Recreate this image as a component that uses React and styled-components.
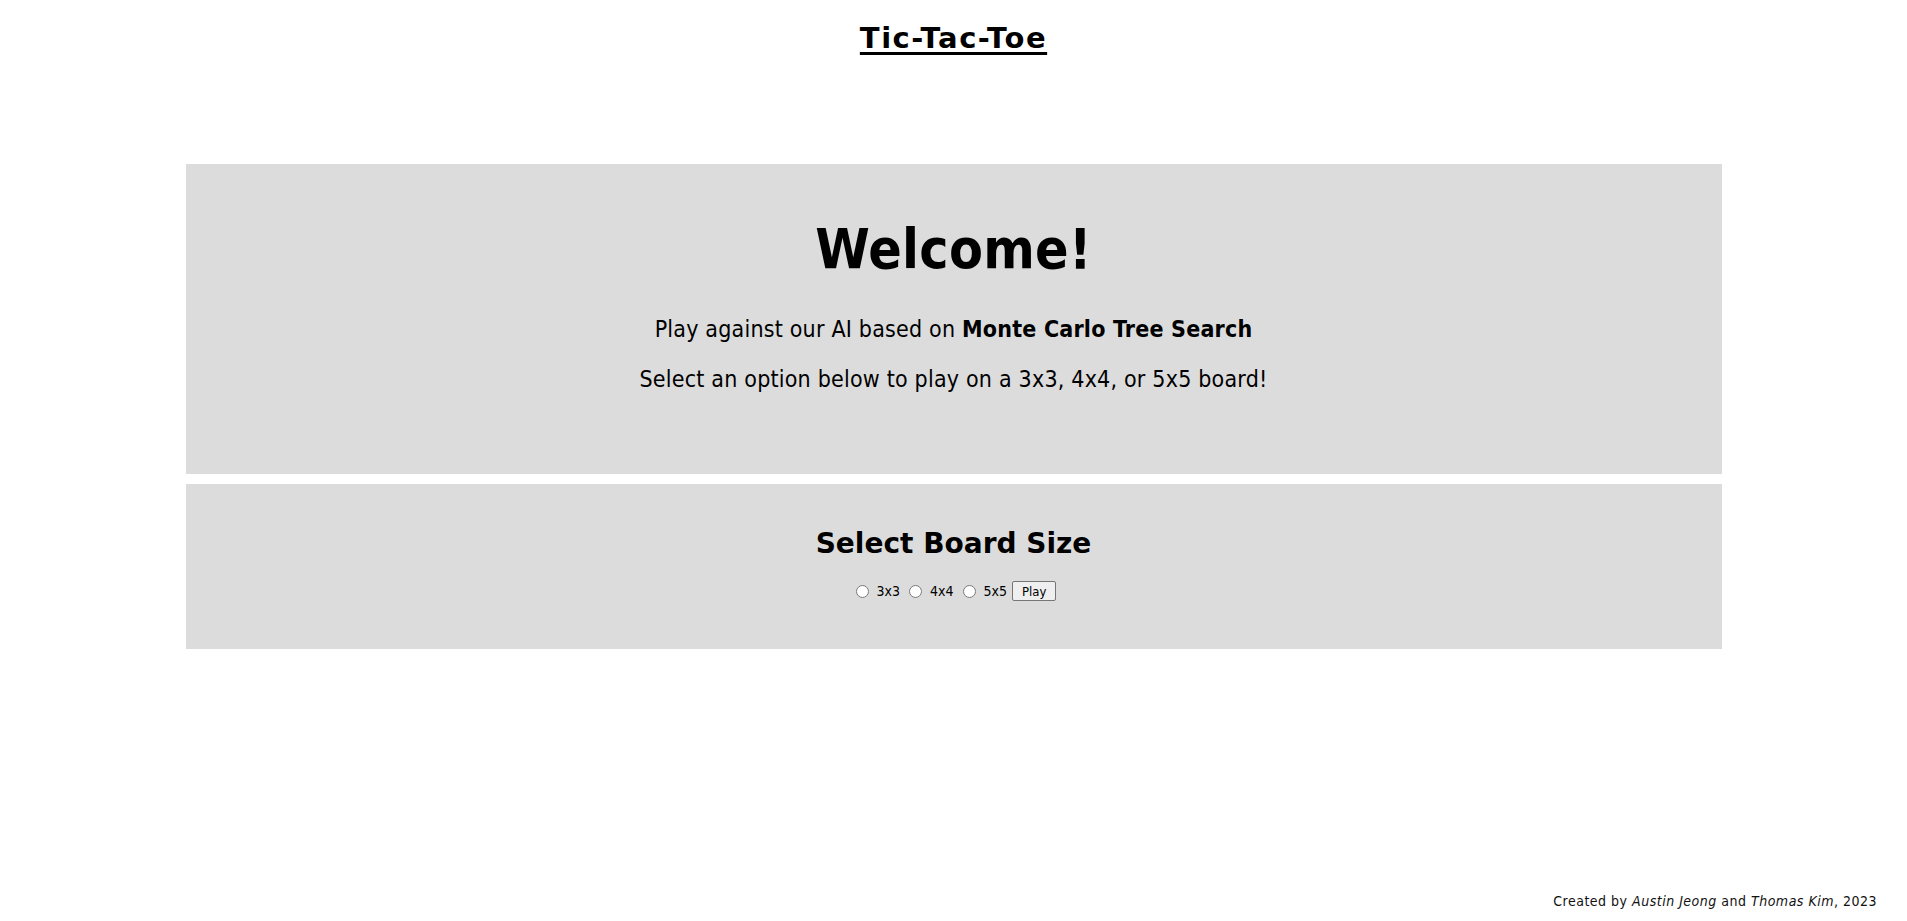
import React from "react";
import styled, { createGlobalStyle } from "styled-components";

const GlobalStyle = createGlobalStyle`
  html, body { margin: 0; padding: 0; background: #ffffff; }
  body {
    font-family: "DejaVu Sans Condensed", "DejaVu Sans", sans-serif;
    color: #000;
  }
  * { box-sizing: border-box; }
`;

const Page = styled.div`
  min-height: 100vh;
  display: flex;
  flex-direction: column;
`;

const Title = styled.h1`
  margin: 21px 0 0;
  text-align: center;
  font-family: "DejaVu Sans", sans-serif;
  font-size: 29px;
  line-height: 34px;
  font-weight: 700;
  letter-spacing: 1.5px;
  text-decoration: underline;
  text-decoration-thickness: 3px;
  text-underline-offset: 4px;
`;

const Main = styled.main`
  width: 1536px;
  margin: 109px auto 0;
  display: flex;
  flex-direction: column;
  gap: 10px;
`;

const Panel = styled.section`
  background: #dcdcdc;
  display: flex;
  flex-direction: column;
  align-items: center;
  padding: ${(p) => p.$pad};
  height: ${(p) => p.$h}px;
`;

const Welcome = styled.h2`
  margin: 0;
  font-size: 55px;
  line-height: 64px;
  font-weight: 700;
  letter-spacing: 0.3px;
`;

const Lead = styled.p`
  margin: ${(p) => p.$mt}px 0 0;
  font-size: 23px;
  line-height: 28px;
  letter-spacing: 0.2px;
  b { font-weight: 700; }
`;

const SectionTitle = styled.h3`
  margin: 0;
  font-family: "DejaVu Sans", sans-serif;
  font-size: 28px;
  line-height: 34px;
  font-weight: 700;
`;

const OptionRow = styled.form`
  margin-top: 20px;
  height: 20px;
  display: flex;
  align-items: center;
  font-size: 14px;
`;

const Radio = styled.input`
  width: 13px;
  height: 13px;
  margin: 0 4px 0 5px;
`;

const OptionLabel = styled.label`
  margin-right: 0;
`;

const PlayButton = styled.button`
  margin-left: 5px;
  height: 20px;
  padding: 0 9px;
  font-family: "DejaVu Sans Condensed", sans-serif;
  font-size: 13px;
  background: #efefef;
  border: 1px solid #767676;
  border-radius: 2px;
  color: #000;
`;

const Footer = styled.footer`
  margin-top: auto;
  padding: 0 30px 11px 0;
  text-align: right;
  font-size: 14px;
  line-height: 17px;
  letter-spacing: 0.5px;
  color: #111;
  em { font-style: italic; }
`;

export default function App() {
  return (
    <>
      <GlobalStyle />
      <Page>
        <Title>Tic-Tac-Toe</Title>
        <Main>
          <Panel $pad="53px 0 0" $h={310}>
            <Welcome>Welcome!</Welcome>
            <Lead $mt={34}>
              Play against our AI based on <b>Monte Carlo Tree Search</b>
            </Lead>
            <Lead $mt={22}>Select an option below to play on a 3x3, 4x4, or 5x5 board!</Lead>
          </Panel>
          <Panel $pad="43px 0 0" $h={165}>
            <SectionTitle>Select Board Size</SectionTitle>
            <OptionRow onSubmit={(e) => e.preventDefault()}>
              <Radio type="radio" name="size" id="s3" value="3" />
              <OptionLabel htmlFor="s3">&nbsp;3x3&nbsp;</OptionLabel>
              <Radio type="radio" name="size" id="s4" value="4" />
              <OptionLabel htmlFor="s4">&nbsp;4x4&nbsp;</OptionLabel>
              <Radio type="radio" name="size" id="s5" value="5" />
              <OptionLabel htmlFor="s5">&nbsp;5x5</OptionLabel>
              <PlayButton type="submit">Play</PlayButton>
            </OptionRow>
          </Panel>
        </Main>
        <Footer>
          Created by <em>Austin Jeong</em> and <em>Thomas Kim</em>, 2023
        </Footer>
      </Page>
    </>
  );
}
